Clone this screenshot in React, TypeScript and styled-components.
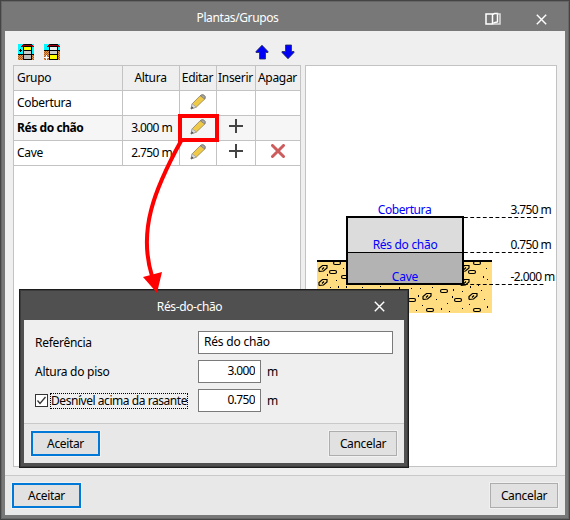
import React from 'react';
import styled, { createGlobalStyle, css } from 'styled-components';

const Global = createGlobalStyle`
  *{box-sizing:border-box}
  html,body{margin:0;padding:0}
  body{font:12px/16px "Noto Sans","Open Sans",sans-serif;letter-spacing:-.35px;color:#000;overflow:hidden}
  svg{display:block;flex:none}
  button,input{font:inherit;color:inherit;letter-spacing:inherit}
`;

const Stage = styled.div`position:relative;width:570px;height:520px;`;

const Frame = styled.section<{ $dark?: boolean }>`
  display:flex;flex-direction:column;
  width:${p => (p.$dark ? 390 : 570)}px;height:${p => (p.$dark ? 179 : 520)}px;
  border:1px solid ${p => (p.$dark ? '#1c1c1c' : '#444')};
  background:${p => (p.$dark ? '#505050' : '#787878')};
  box-shadow:inset 0 0 0 1px ${p => (p.$dark ? '#3c3c3c' : '#666')};
  padding:0 4px 4px;
  ${p => p.$dark && css`position:absolute;left:19px;top:289px;`}
`;
const TitleBar = styled.header`
  position:relative;height:30px;flex:none;display:flex;align-items:center;justify-content:center;color:#fff;padding-top:3px;
`;
const TitleText = styled.span<{ $dx?: number }>`letter-spacing:-0.38px;margin-left:${p => p.$dx ?? 0}px;`;
const Controls = styled.div<{ $right: number }>`
  position:absolute;right:${p => p.$right}px;top:11px;display:flex;gap:35px;align-items:center;
`;
const Body = styled.div`flex:1;min-height:0;background:#efefef;display:flex;flex-direction:column;`;
const Content = styled.div`flex:1;min-height:0;padding:13px 8px 8px;display:flex;flex-direction:column;`;
const Footer = styled.footer`
  height:40px;flex:none;background:#e8e8e8;border-top:1px solid #c9c9c9;display:flex;justify-content:space-between;
  padding:7px 7px 0;
`;
const Button = styled.button<{ $primary?: boolean }>`
  width:${p => (p.$primary ? 69 : 68)}px;height:25px;padding:0;background:#e1e1e1;
  border:${p => (p.$primary ? '2px solid #0078d7' : '1px solid #adadad')};
  box-shadow:0 0 0 1px #f1f1f1;border-radius:0;
`;

const Toolbar = styled.div`height:21px;display:flex;width:288px;padding:0 5px;justify-content:space-between;`;
const ToolGroup = styled.div`display:flex;gap:10px;`;
const Panels = styled.div`display:flex;gap:4px;flex:1;min-height:0;`;
const Panel = styled.div<{ $w: number }>`width:${p => p.$w}px;background:#fff;border:1px solid #c3c3c3;`;
const Row = styled.div<{ $tone?: string }>`
  display:grid;grid-template-columns:109px 57px 37px 39px 44px;height:25px;background:${p => p.$tone ?? '#fff'};
  border-bottom:1px solid #c3c3c3;
`;
const Cell = styled.div<{ $align?: string; $bold?: boolean; $lift?: number }>`
  display:flex;align-items:center;justify-content:${p => p.$align ?? 'flex-start'};
  padding:${p => (p.$align === 'flex-end' ? '0 7px 0 0' : p.$align ? `0 1px ${p.$lift ?? 0}px 0` : '0 0 0 3px')};
  font-weight:${p => (p.$bold ? 700 : 400)};
  letter-spacing:${p => (p.$align === 'flex-end' ? '-0.6px' : p.$bold ? '-0.42px' : '-0.3px')};
  white-space:nowrap;
  &:not(:last-child){border-right:1px solid #c3c3c3}
`;

const Form = styled.div`flex:1;display:flex;flex-direction:column;gap:6px;padding:11px 11px 0;`;
const Field = styled.div`display:grid;grid-template-columns:163px auto 1fr;height:23px;align-items:center;`;
const Label = styled.label`letter-spacing:-0.28px;`;
const Input = styled.input<{ $wide?: boolean }>`
  width:${p => (p.$wide ? 195 : 63)}px;height:23px;border:1px solid #7a7a7a;background:#fff;outline:0;border-radius:0;
  padding:0 5px 2px;text-align:${p => (p.$wide ? 'left' : 'right')};
  letter-spacing:${p => (p.$wide ? '-0.2px' : '-0.65px')};
`;
const Unit = styled.span`padding-left:6px;`;
const CheckRow = styled.label`display:flex;align-items:center;gap:2px;`;
const Box = styled.span`width:13px;height:13px;border:1px solid #333;background:#fff;`;
const Focus = styled.span`
  width:138px;height:16px;border:1px dotted #000;line-height:13px;white-space:nowrap;letter-spacing:-0.45px;
`;
const Overlay = styled.svg`position:absolute;left:0;top:0;pointer-events:none;`;

const Close = () => (
  <svg width="11" height="11"><path d="M.8.8 10.2 10.2M10.2.8.8 10.2" stroke="#fff" strokeWidth="1.4" /></svg>
);
const Book = () => (
  <svg width="16" height="14" fill="none" stroke="#fff">
    <path d="M1 2h6.500v10H1zM7.500 11.500V2.500l2-1H12.500v8.500l-2.500.5-2.500 1.500" strokeWidth="1.5" />
    <path d="M12.500 2H15v10H8" strokeWidth="1.500" stroke="#ddd" />
  </svg>
);
const Floors = ({ below }: { below?: boolean }) => (
  <svg width="16" height="16" shapeRendering="crispEdges">
    <defs>
      <pattern id="soil" width="2" height="2" patternUnits="userSpaceOnUse">
        <path fill="#e59a50" d="M0 0h2v2H0z" /><path fill="#a85b20" d="M0 0h1v1H0zM1 1h1v1H1z" />
      </pattern>
    </defs>
    <path fill="#00f7ff" d="M0 0h16v10H0z" />
    <path fill="url(#soil)" d={below ? 'M0 7h16v9H0z' : 'M0 11h16v5H0z'} />
    <path fill="#000" d={below ? 'M0 6h6v1H0zM13 6h3v1h-3z' : 'M0 10h6v1H0zM13 10h3v1h-3z'} />
    <path fill="#000" d="M5 2h9v14H5z" />
    <path fill={below ? '#eee' : '#ff0'} d="M6 3h7v3H6z" />
    <path fill="#ccc" d="M6 7h7v3H6z" />
    <path fill={below ? '#ff0' : '#bbb'} d="M6 11h7v4H6z" />
    <path fill="#000" d="M5 0h9v1H5z" />
    <path fill="#a00010" d="M4 1h11v1h1v1h-2V2H5v1H3V2h1z" />
    {below ? <path fill="#fff" d="M2 11h1v2h2v1H3v2H2v-2H0v-1h2z" /> : <path fill="#000" d="M2 5h1v1h1v1H3v1H2V7H1V6h1z" />}
  </svg>
);
const Arrow = ({ down }: { down?: boolean }) => (
  <svg width="16" height="16">
    <g transform={down ? 'matrix(1 0 0 -1 0 16)' : undefined} strokeLinejoin="miter">
      <path d="M8 1.200 14 7.500v1h-2.500V15h-6V8.500H2v-1z" fill="#0000f5" stroke="#222a55" strokeWidth=".8" />
    </g>
  </svg>
);
const Pencil = () => (
  <svg width="16" height="16">
    <path d="M1 15 2.200 9.800 10.200 1.700Q12 .3 13.800 1.100 15.900 2.500 15 4.800L6.400 13Z" fill="#efca48" stroke="#908056" strokeWidth=".8" />
    <path d="M2.200 9.800 6.400 13 1 15Z" fill="#ddd" stroke="#999" strokeWidth=".7" />
    <path d="M10.200 1.700 14.800 5Q16 2.500 13.800 1.100 12 .3 10.200 1.700z" fill="#aaa" stroke="#777" strokeWidth=".8" />
    <path d="m1 15 .7-2.700 1.800 1.800z" fill="#444" />
  </svg>
);
const Plus = () => (
  <svg width="14" height="14"><path d="M7 0v14M0 7h14" stroke="#444" strokeWidth="2" /></svg>
);
const Cross = () => (
  <svg width="14" height="14"><path d="M1.500 1.500 12.500 12.500M12.500 1.500 1.500 12.500" stroke="#cd5c5c" strokeWidth="3" strokeLinecap="round" /></svg>
);

const rows = [
  { name: 'Cobertura', height: '' },
  { name: 'Rés do chão', height: '3.000 m', active: true, insert: true },
  { name: 'Cave', height: '2.750 m', insert: true, remove: true },
];

const leaves = [[323, 268], [323, 282], [465, 268], [465, 282], [427, 296], [473, 296]];
const pebbles = [[337, 263], [333, 272], [345, 277], [477, 263], [472, 272], [444, 291], [412, 300], [458, 300], [430, 310], [477, 310]];
const specks = [
  [327, 274], [336, 280], [343, 268], [338, 286], [330, 287], [486, 268], [483, 276], [487, 279], [478, 285], [470, 286],
  [420, 288], [432, 287], [453, 289], [462, 291], [481, 290], [418, 295], [436, 299], [447, 303], [452, 296], [484, 299],
  [422, 305], [441, 308], [462, 308], [469, 304], [487, 306], [416, 310], [449, 311], [346, 286], [362, 287], [380, 286], [399, 287], [411, 288],
];

const Section = () => (
  <svg width="250" height="399" viewBox="306 66 250 399" fontSize="12" letterSpacing="-.2">
    <path fill="#ffdd80" d="M317 260h175v53H317z" />
    <g fill="none" stroke="#000" strokeWidth="1.200">
      {leaves.map(([x, y]) => (
        <path key={`${x}-${y}`} transform={`translate(${x} ${y})`} d="M-4 3.500V.5L-.5-2.500H4V0L.5 3-4 3.500M-1 1.500 1-.5" />
      ))}
      {pebbles.map(([x, y]) => <rect key={`${x}-${y}`} x={x - 3.5} y={y - 1.5} width="7" height="3" rx="1.500" />)}
    </g>
    <g shapeRendering="crispEdges">
      {specks.map(([x, y], i) => <rect key={`${x}-${y}`} x={x} y={y} width="1" height={i % 3 ? 1 : 2} />)}
    </g>
    <path fill="#000" d="M317 260h175v2H317z" />
    <path fill="#dcdcdc" d="M347 217h116v35H347z" />
    <path fill="#b3b3b3" d="M347 252h116v32H347z" />
    <path d="M347 217h116v67H347z" fill="none" stroke="#000" strokeWidth="2" />
    <path d="M464 217.500h81M464 252.500h81M464 284.500h81" stroke="#000" strokeDasharray="3.800 2.500" />
    <path d="M347 252.500h116" stroke="#000" />
    <g fill="#00f" textAnchor="middle">
      <text x="404.500" y="214" letterSpacing="-.4">Cobertura</text><text x="405" y="249" letterSpacing="-.3">Rés do chão</text><text x="405" y="281">Cave</text>
    </g>
    <g letterSpacing="-.65">
      <text x="510.500" y="214">3.750 m</text><text x="510.500" y="249">0.750 m</text><text x="510.500" y="281" letterSpacing="-.6">-2.000 m</text>
    </g>
  </svg>
);

export default function App() {
  return (
    <Stage>
      <Global />
      <Frame>
        <TitleBar>
          <TitleText $dx={-95}>Plantas/Grupos</TitleText>
          <Controls $right={18}><Book /><Close /></Controls>
        </TitleBar>
        <Body>
          <Content>
            <Toolbar>
              <ToolGroup><Floors /><Floors below /></ToolGroup>
              <ToolGroup><Arrow /><Arrow down /></ToolGroup>
            </Toolbar>
            <Panels>
              <Panel $w={288}>
                <Row $tone="#efefef">
                  <Cell>Grupo</Cell><Cell $align="center">Altura</Cell><Cell $align="center">Editar</Cell>
                  <Cell $align="center">Inserir</Cell><Cell $align="center">Apagar</Cell>
                </Row>
                {rows.map(r => (
                  <Row key={r.name} $tone={r.active ? '#f6f6f6' : '#fff'}>
                    <Cell $bold={r.active}>{r.name}</Cell>
                    <Cell $align="flex-end">{r.height}</Cell>
                    <Cell $align="center" $lift={3}><Pencil /></Cell>
                    <Cell $align="center" $lift={4}>{r.insert && <Plus />}</Cell>
                    <Cell $align="center" $lift={4}>{r.remove && <Cross />}</Cell>
                  </Row>
                ))}
              </Panel>
              <Panel $w={252}><Section /></Panel>
            </Panels>
          </Content>
          <Footer><Button $primary>Aceitar</Button><Button>Cancelar</Button></Footer>
        </Body>
      </Frame>
      <Frame $dark>
        <TitleBar>
          <TitleText $dx={-49}>Rés-do-chão</TitleText>
          <Controls $right={19}><Close /></Controls>
        </TitleBar>
        <Body>
          <Form>
            <Field><Label>Referência</Label><Input $wide defaultValue="Rés do chão" /></Field>
            <Field><Label>Altura do piso</Label><Input defaultValue="3.000" /><Unit>m</Unit></Field>
            <Field>
              <CheckRow>
                <Box><svg width="11" height="11"><path d="M1.500 5.500 4 8.500 9.500 2" fill="none" stroke="#333" strokeWidth="1.300" /></svg></Box>
                <Focus>Desnível acima da rasante</Focus>
              </CheckRow>
              <Input defaultValue="0.750" /><Unit>m</Unit>
            </Field>
          </Form>
          <Footer><Button $primary>Aceitar</Button><Button>Cancelar</Button></Footer>
        </Body>
      </Frame>
      <Overlay width="570" height="520">
        <path d="M180 116h37v24h-37z" fill="none" stroke="#f00" strokeWidth="4" />
        <path d="M181 141C154 190 138 231 152 276" fill="none" stroke="#f00" strokeWidth="4" />
        <path d="M143 277 162 272 157 293z" fill="#f00" />
      </Overlay>
    </Stage>
  );
}
